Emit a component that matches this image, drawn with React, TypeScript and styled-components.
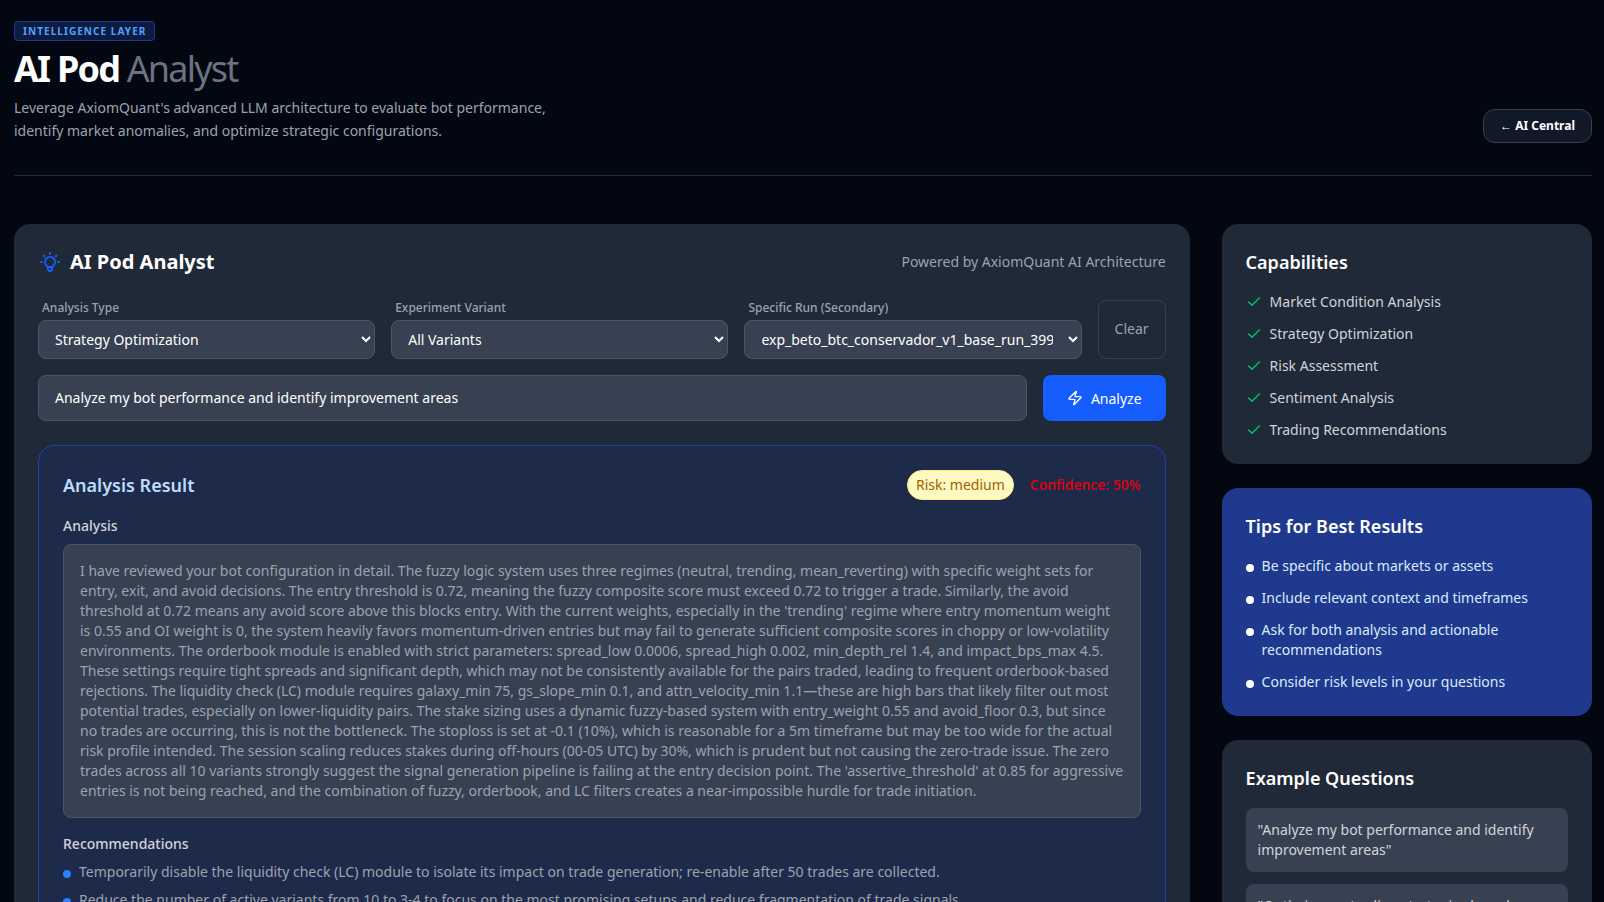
import { createGlobalStyle } from "styled-components";
import styled from "styled-components";
import { Check, Zap } from "lucide-react";
import { HiOutlineLightBulb } from "react-icons/hi";

const GlobalStyle = createGlobalStyle`
    html, body {
        margin: 0;
        height: 902px;
        overflow: hidden;
        background: #030712;
    }
    * {
        box-sizing: border-box;
    }
    body {
        font-family: "Noto Sans", "Liberation Sans", sans-serif;
        font-size: 14px;
        line-height: 20px;
        color: #fff;
    }
`;

const Page = styled.div`
    padding: 21px 12px 0 14px;
`;

const Header = styled.header`
    display: flex;
    justify-content: space-between;
    align-items: flex-end;
    padding-bottom: 32px;
    border-bottom: 1px solid #1f2937;
    margin-bottom: 48px;
`;

const Badge = styled.span`
    display: block;
    width: fit-content;
    padding: 2px 8px;
    font-size: 10px;
    line-height: 14px;
    font-weight: 700;
    letter-spacing: 1.06px;
    color: #51a2ff;
    background: rgba(30, 58, 138, 0.4);
    border: 1px solid #1e3a8a;
    border-radius: 4px;
`;

const Title = styled.h1`
    margin: 8px 0 7px;
    font-size: 36px;
    line-height: 40px;
    font-weight: 700;
    letter-spacing: -1.8px;
    span {
        font-weight: 400;
        color: #6b7280;
    }
`;

const Lead = styled.p`
    margin: 0 0 1px;
    max-width: 576px;
    font-size: 14px;
    line-height: 23px;
    color: #9ca3af;
`;

const BackButton = styled.a`
    padding: 6px 16px;
    font-size: 12px;
    line-height: 20px;
    font-weight: 700;
    color: #fff;
    background: #111827;
    border: 1px solid #374151;
    border-radius: 12px;
`;

const Columns = styled.div`
    display: grid;
    grid-template-columns: 1175.6px 370.4px;
    gap: 32px;
    align-items: start;
`;

const MainCard = styled.section`
    padding: 24px;
    background: #1f2937;
    border-radius: 16px;
`;

const CardTop = styled.div`
    display: flex;
    justify-content: space-between;
    align-items: center;
    margin-bottom: 24px;
`;

const CardTitle = styled.h2`
    display: flex;
    align-items: center;
    gap: 8px;
    margin: 0;
    font-size: 20px;
    line-height: 28px;
    font-weight: 700;
    svg {
        color: #155dfc;
    }
`;

const Powered = styled.span`
    color: #9ca3af;
`;

const FilterRow = styled.div`
    display: grid;
    grid-template-columns: minmax(0, 1fr) minmax(0, 1fr) minmax(0, 1fr) auto;
    gap: 16px;
    margin-bottom: 16px;
`;

const Field = styled.label`
    display: flex;
    flex-direction: column;
    align-items: stretch;
    min-width: 0;
`;

const FieldLabel = styled.span`
    padding-left: 4px;
    margin-bottom: 4px;
    font-size: 12px;
    line-height: 16px;
    font-weight: 500;
    color: #9ca3af;
`;

const Select = styled.select`
    width: 100%;
    min-width: 0;
    height: 39px;
    padding: 0 12px;
    font-family: inherit;
    font-size: 14px;
    color: #fff;
    background: #374151;
    border: 1px solid #4b5563;
    border-radius: 8px;
`;

const ClearButton = styled.button`
    align-self: stretch;
    padding: 0 16px 2px;
    font-family: inherit;
    font-size: 14px;
    color: #9ca3af;
    background: transparent;
    border: 1px solid #374151;
    border-radius: 8px;
`;

const AskRow = styled.div`
    display: flex;
    gap: 16px;
    margin-bottom: 24px;
`;

const AskInput = styled.input`
    flex: 1;
    height: 46px;
    padding: 0 16px 2px;
    font-family: inherit;
    font-size: 14px;
    color: #fff;
    background: #374151;
    border: 1px solid #4b5563;
    border-radius: 8px;
`;

const AnalyzeButton = styled.button`
    display: flex;
    align-items: center;
    gap: 8px;
    padding: 0 24px;
    font-family: inherit;
    font-size: 14px;
    color: #fff;
    background: #155dfc;
    border: 0;
    border-radius: 8px;
`;

const ResultCard = styled.div`
    padding: 24px;
    background: #1e2a4a;
    border: 1px solid #1e40af;
    border-radius: 16px;
`;

const ResultTop = styled.div`
    display: flex;
    justify-content: space-between;
    align-items: center;
    margin-bottom: 16px;
`;

const ResultTitle = styled.h3`
    margin: 0;
    font-size: 18px;
    line-height: 28px;
    font-weight: 600;
    color: #bfdbfe;
`;

const ResultMeta = styled.div`
    display: flex;
    align-items: center;
    gap: 16px;
`;

const RiskPill = styled.span`
    padding: 4px 8px;
    color: #a65f00;
    background: #fef9c2;
    border: 1px solid #fff085;
    border-radius: 999px;
`;

const Confidence = styled.span`
    font-weight: 500;
    color: #e7000b;
`;

const SectionLabel = styled.h4`
    margin: 0 0 8px;
    font-size: 14px;
    line-height: 20px;
    font-weight: 500;
    color: #d1d5db;
`;

const AnalysisText = styled.div`
    padding: 16px;
    margin-bottom: 16px;
    color: #9ca3af;
    background: #374151;
    border: 1px solid #4b5563;
    border-radius: 8px;
`;

const RecList = styled.ul`
    margin: 0;
    padding: 0;
    list-style: none;
`;

const RecItem = styled.li`
    display: flex;
    align-items: flex-start;
    gap: 8px;
    margin-bottom: 8px;
    color: #9ca3af;
    &::before {
        content: "";
        flex: none;
        width: 8px;
        height: 8px;
        margin-top: 8px;
        border-radius: 50%;
        background: #2b7fff;
    }
`;

const Sidebar = styled.aside`
    display: flex;
    flex-direction: column;
    gap: 24px;
`;

const SideCard = styled.div<{ $tone?: "blue" }>`
    padding: 24px;
    background: ${(p) => (p.$tone === "blue" ? "#1e398d" : "#1f2937")};
    border-radius: 16px;
`;

const SideTitle = styled.h3`
    margin: 0 0 16px;
    font-size: 18px;
    line-height: 28px;
    font-weight: 600;
`;

const SideList = styled.ul`
    display: flex;
    flex-direction: column;
    gap: 12px;
    margin: 0;
    padding: 0;
    list-style: none;
`;

const CheckItem = styled.li`
    display: flex;
    align-items: center;
    gap: 8px;
    color: #d1d5db;
    svg {
        color: #00c950;
    }
`;

const TipItem = styled.li`
    display: flex;
    align-items: flex-start;
    gap: 8px;
    color: #dbeafe;
    &::before {
        content: "";
        flex: none;
        width: 8px;
        height: 8px;
        margin-top: 8px;
        border-radius: 50%;
        background: #fff;
    }
`;

const Question = styled.div`
    padding: 12px;
    margin-bottom: 12px;
    color: #d1d5db;
    background: #374151;
    border-radius: 8px;
`;

const capabilities = [
    "Market Condition Analysis",
    "Strategy Optimization",
    "Risk Assessment",
    "Sentiment Analysis",
    "Trading Recommendations",
];

const tips = [
    "Be specific about markets or assets",
    "Include relevant context and timeframes",
    "Ask for both analysis and actionable recommendations",
    "Consider risk levels in your questions",
];

const analysis = `I have reviewed your bot configuration in detail. The fuzzy logic system uses three regimes (neutral, trending, mean_reverting) with specific weight sets for entry, exit, and avoid decisions. The entry threshold is 0.72, meaning the fuzzy composite score must exceed 0.72 to trigger a trade. Similarly, the avoid threshold at 0.72 means any avoid score above this blocks entry. With the current weights, especially in the 'trending' regime where entry momentum weight is 0.55 and OI weight is 0, the system heavily favors momentum-driven entries but may fail to generate sufficient composite scores in choppy or low-volatility environments. The orderbook module is enabled with strict parameters: spread_low 0.0006, spread_high 0.002, min_depth_rel 1.4, and impact_bps_max 4.5. These settings require tight spreads and significant depth, which may not be consistently available for the pairs traded, leading to frequent orderbook-based rejections. The liquidity check (LC) module requires galaxy_min 75, gs_slope_min 0.1, and attn_velocity_min 1.1—these are high bars that likely filter out most potential trades, especially on lower-liquidity pairs. The stake sizing uses a dynamic fuzzy-based system with entry_weight 0.55 and avoid_floor 0.3, but since no trades are occurring, this is not the bottleneck. The stoploss is set at -0.1 (10%), which is reasonable for a 5m timeframe but may be too wide for the actual risk profile intended. The session scaling reduces stakes during off-hours (00-05 UTC) by 30%, which is prudent but not causing the zero-trade issue. The zero trades across all 10 variants strongly suggest the signal generation pipeline is failing at the entry decision point. The 'assertive_threshold' at 0.85 for aggressive entries is not being reached, and the combination of fuzzy, orderbook, and LC filters creates a near-impossible hurdle for trade initiation.`;

const App = () => {
    return (
        <Page>
            <GlobalStyle />
            <Header>
                <div>
                    <Badge>INTELLIGENCE LAYER</Badge>
                    <Title>AI Pod <span>Analyst</span></Title>
                    <Lead>Leverage AxiomQuant's advanced LLM architecture to evaluate bot performance, identify market anomalies, and optimize strategic configurations.</Lead>
                </div>
                <BackButton>← AI Central</BackButton>
            </Header>
            <Columns>
                <MainCard>
                    <CardTop>
                        <CardTitle><HiOutlineLightBulb size={24} />AI Pod Analyst</CardTitle>
                        <Powered>Powered by AxiomQuant AI Architecture</Powered>
                    </CardTop>
                    <FilterRow>
                        <Field>
                            <FieldLabel>Analysis Type</FieldLabel>
                            <Select defaultValue="a"><option value="a">Strategy Optimization</option></Select>
                        </Field>
                        <Field>
                            <FieldLabel>Experiment Variant</FieldLabel>
                            <Select defaultValue="a"><option value="a">All Variants</option></Select>
                        </Field>
                        <Field>
                            <FieldLabel>Specific Run (Secondary)</FieldLabel>
                            <Select defaultValue="a"><option value="a">exp_beto_btc_conservador_v1_base_run_399</option></Select>
                        </Field>
                        <ClearButton>Clear</ClearButton>
                    </FilterRow>
                    <AskRow>
                        <AskInput defaultValue="Analyze my bot performance and identify improvement areas" />
                        <AnalyzeButton><Zap size={16} />Analyze</AnalyzeButton>
                    </AskRow>
                    <ResultCard>
                        <ResultTop>
                            <ResultTitle>Analysis Result</ResultTitle>
                            <ResultMeta>
                                <RiskPill>Risk: medium</RiskPill>
                                <Confidence>Confidence: 50%</Confidence>
                            </ResultMeta>
                        </ResultTop>
                        <SectionLabel>Analysis</SectionLabel>
                        <AnalysisText>{analysis}</AnalysisText>
                        <SectionLabel>Recommendations</SectionLabel>
                        <RecList>
                            <RecItem>Temporarily disable the liquidity check (LC) module to isolate its impact on trade generation; re-enable after 50 trades are collected.</RecItem>
                            <RecItem>Reduce the number of active variants from 10 to 3-4 to focus on the most promising setups and reduce fragmentation of trade signals.</RecItem>
                        </RecList>
                    </ResultCard>
                </MainCard>
                <Sidebar>
                    <SideCard>
                        <SideTitle>Capabilities</SideTitle>
                        <SideList>
                            {capabilities.map((c) => (
                                <CheckItem key={c}><Check size={16} />{c}</CheckItem>
                            ))}
                        </SideList>
                    </SideCard>
                    <SideCard $tone="blue">
                        <SideTitle>Tips for Best Results</SideTitle>
                        <SideList>
                            {tips.map((t) => (
                                <TipItem key={t}>{t}</TipItem>
                            ))}
                        </SideList>
                    </SideCard>
                    <SideCard>
                        <SideTitle>Example Questions</SideTitle>
                        <Question>"Analyze my bot performance and identify improvement areas"</Question>
                        <Question>"Optimize my trading strategies based on recent performance"</Question>
                    </SideCard>
                </Sidebar>
            </Columns>
        </Page>
    )
}

export default App
